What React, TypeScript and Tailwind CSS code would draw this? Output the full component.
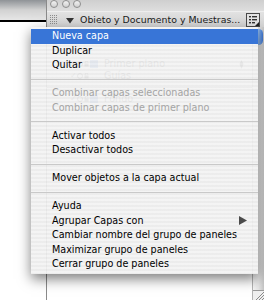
import React from "react";

type Item =
  | { kind: "sep" }
  | { kind: "item"; t: string; hl?: boolean; dis?: boolean; sub?: boolean };

const items: Item[] = [
  { kind: "item", t: "Nueva capa", hl: true },
  { kind: "item", t: "Duplicar" },
  { kind: "item", t: "Quitar" },
  { kind: "sep" },
  { kind: "item", t: "Combinar capas seleccionadas", dis: true },
  { kind: "item", t: "Combinar capas de primer plano", dis: true },
  { kind: "sep" },
  { kind: "item", t: "Activar todos" },
  { kind: "item", t: "Desactivar todos" },
  { kind: "sep" },
  { kind: "item", t: "Mover objetos a la capa actual" },
  { kind: "sep" },
  { kind: "item", t: "Ayuda" },
  { kind: "item", t: "Agrupar Capas con", sub: true },
  { kind: "item", t: "Cambiar nombre del grupo de paneles" },
  { kind: "item", t: "Maximizar grupo de paneles" },
  { kind: "item", t: "Cerrar grupo de paneles" },
];

function Grip() {
  const dots: React.ReactNode[] = [];
  for (let r = 0; r < 5; r++)
    for (let c = 0; c < 4; c++)
      dots.push(
        <rect key={`${r}-${c}`} x={c * 2} y={r * 2} width="1" height="1" fill="#8c8c8c" />
      );
  return (
    <svg width="8" height="10" viewBox="0 0 8 10">
      {dots}
    </svg>
  );
}

function MenuIcon() {
  return (
    <svg width="14" height="14" viewBox="0 0 14 14">
      <rect x="0.5" y="0.5" width="13" height="13" fill="#e4e4e4" stroke="#4a4a4a" />
      <rect x="3" y="3" width="2" height="1.4" fill="#333" />
      <rect x="6" y="3" width="5" height="1.4" fill="#333" />
      <rect x="3" y="6" width="2" height="1.4" fill="#333" />
      <rect x="6" y="6" width="5" height="1.4" fill="#333" />
      <rect x="3" y="9" width="2" height="1.4" fill="#333" />
      <rect x="6" y="9" width="3" height="1.4" fill="#333" />
      <path d="M9 13 L13 9 L13 13 Z" fill="#222" />
    </svg>
  );
}

function LayerRow({ name, square, pen }: { name: string; square?: boolean; pen?: boolean }) {
  return (
    <div className="flex h-[12px] items-center text-[9.6px] text-[#555]">
      <div className="w-[23px]" />
      <span className="w-[7px] text-[8px] leading-none">✓</span>
      <svg width="6" height="6" viewBox="0 0 6 6" className="mr-[1px]">
        <circle cx="3" cy="3" r="2.5" fill="none" stroke="#555" />
      </svg>
      <svg width="5" height="6" viewBox="0 0 5 6" className="mr-[1px]">
        <rect x="0.5" y="2.5" width="4" height="3" fill="#555" />
        <path d="M1.2 2.5 V1.5 a1.3 1.3 0 0 1 2.6 0" fill="none" stroke="#555" />
      </svg>
      <div className={`h-[8px] w-[8px] ${square ? "bg-[#5b8fe4]" : ""}`} />
      <span className="ml-[6px] flex-1">{name}</span>
      {pen ? (
        <svg width="5" height="9" viewBox="0 0 5 9" className="mr-[8px]">
          <path d="M2.5 0 L4.5 4 L2.5 9 L0.5 4 Z" fill="#555" />
        </svg>
      ) : null}
    </div>
  );
}

export default function App() {
  return (
    <div
      className="relative flex h-[300px] w-[264px] overflow-hidden bg-white"
      style={{ fontFamily: '"DejaVu Sans", "Liberation Sans", sans-serif' }}
    >
      {/* background app window edge */}
      <div className="flex w-[46px] flex-col">
        <div className="h-[20px] bg-gradient-to-b from-[#8f9397] via-[#d2d2d2] to-[#e6e6e6]" />
        <div className="h-[2px] bg-black" />
        <div className="flex-1 bg-white" />
      </div>

      {/* floating panel */}
      <div className="flex flex-1 flex-col border-l border-[#8a8a8a]">
        {/* title bar */}
        <div className="flex h-[12px] items-start gap-[3.5px] border-b border-[#eeeeee] bg-gradient-to-b from-[#cfcfcf] to-[#dedede] pl-[3px]">
          {[0, 1, 2].map((i) => (
            <div
              key={i}
              className="h-[8px] w-[8px] rounded-full border-[1.5px] border-[#8e8e8e] bg-gradient-to-b from-[#f2f2f2] to-[#d0d0d0]"
            />
          ))}
        </div>
        {/* tab row */}
        <div className="flex h-[15px] items-center bg-gradient-to-b from-[#e2e2e2] to-[#d3d3d3] pr-[4px]">
          <div className="ml-[3px] flex w-[10px]">
            <Grip />
          </div>
          <svg width="8" height="6" viewBox="0 0 8 6" className="ml-[6px] mt-[3px]">
            <path d="M0 0 H8 L4 5.5 Z" fill="#333" />
          </svg>
          <span className="ml-[6px] mt-[2px] flex-1 whitespace-nowrap text-[9.4px] text-[#1a1a1a]">
            Obieto y Documento y Muestras...
          </span>
          <MenuIcon />
        </div>
        {/* content */}
        <div className="flex flex-1">
          <div className="flex flex-1 flex-col bg-white">
            <div className="h-[14px] border-b border-[#c8c8c8] bg-[#ececec]" />
            <div className="h-[17px]" />
            <LayerRow name="Primer plano" square pen />
            <LayerRow name="Guías" />
            <div className="flex h-[11px] items-center">
              <div className="h-[1px] flex-1 bg-[#999]" />
            </div>
            <LayerRow name="Fondo" square />
            <div className="flex-1" />
          </div>
          <div className="flex w-[12px] flex-col border-l border-[#b4b4b4]">
            <div className="flex flex-1 flex-col bg-gradient-to-r from-[#f6f6f6] via-[#e6e6e6] to-[#c4c4c4] pt-[2px]">
              <div className="mx-[1px] h-[16px] rounded-full bg-gradient-to-r from-[#3d76d4] via-[#8ab6ee] to-[#3d76d4]" />
            </div>
            <div className="h-[10px] border-t border-[#9a9a9a] bg-[#f0f0f0]">
              <svg width="11" height="9" viewBox="0 0 11 9">
                <path d="M3 9 L11 1 M6 9 L11 4 M9 9 L11 7" stroke="#8a8a8a" strokeWidth="1" />
              </svg>
            </div>
          </div>
        </div>
      </div>

      {/* popup menu */}
      <div className="absolute left-[31px] top-[27px] w-[227px] bg-[repeating-linear-gradient(to_bottom,rgba(243,243,243,0.93)_0px,rgba(243,243,243,0.93)_2px,rgba(235,235,235,0.93)_2px,rgba(235,235,235,0.93)_4px)] py-[2px] text-[9.6px] shadow-[0_5px_12px_rgba(0,0,0,0.5)]">
        {items.map((it, i) =>
          it.kind === "sep" ? (
            <div key={i} className="flex h-[13.5px] items-center">
              <div className="h-[1px] w-full bg-[#c9c9c9]" />
            </div>
          ) : (
            <div
              key={i}
              className={`flex h-[14.5px] items-center justify-between pl-[21px] pr-[11px] whitespace-nowrap ${
                it.hl ? "bg-[#3875d7] text-white" : it.dis ? "text-[#a4a4a4]" : "text-black"
              }`}
            >
              <span>{it.t}</span>
              {it.sub ? (
                <svg width="8" height="9" viewBox="0 0 8 9">
                  <path d="M0 0 L8 4.5 L0 9 Z" fill="#4a4a4a" />
                </svg>
              ) : null}
            </div>
          )
        )}
      </div>
    </div>
  );
}
